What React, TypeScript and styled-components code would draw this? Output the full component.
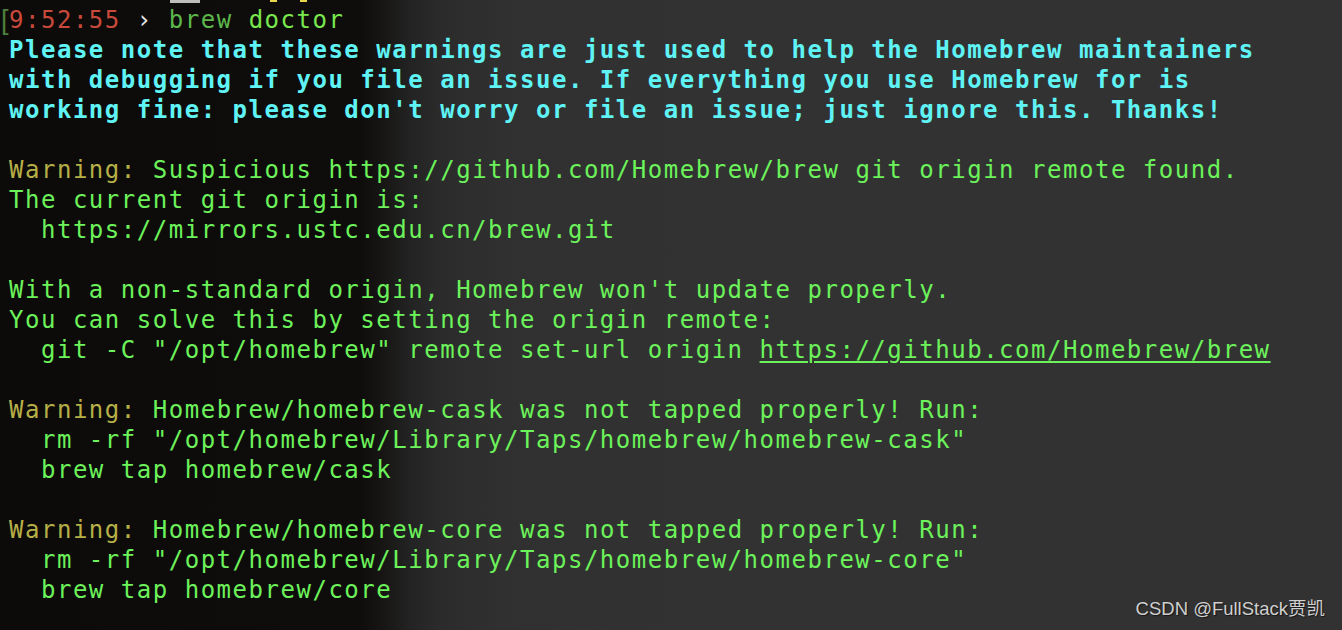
import React from "react";
import styled, { createGlobalStyle } from "styled-components";

const Global = createGlobalStyle`
  html, body { margin: 0; padding: 0; background: #0d0b0a; }
  body { width: 1342px; height: 630px; overflow: hidden; }
`;

const Screen = styled.div`
  position: relative;
  width: 1342px;
  height: 630px;
  box-sizing: border-box;
  padding-left: 9px;
  overflow: hidden;
  background: linear-gradient(
    90deg,
    #0d0b0a 0px,
    #0f0d0c 360px,
    #181716 385px,
    #232323 410px,
    #2b2b2b 440px,
    #303030 500px,
    #323232 700px,
    #323232 100%
  );
`;

const TopStrip = styled.div`
  display: flex;
  height: 3px;
`;

const Scrap = styled.div<{ $x: number; $w: number; $c: string; $h: number }>`
  margin-left: ${(p) => p.$x}px;
  width: ${(p) => p.$w}px;
  height: ${(p) => p.$h}px;
  background: ${(p) => p.$c};
  flex: none;
`;

const Lines = styled.div`
  margin-top: 2px;
  font-family: "DejaVu Sans Mono", "Liberation Mono", monospace;
  font-size: 24px;
  letter-spacing: 1.52px;
  color: #6cf25a;
`;

const Line = styled.div<{ $bold?: boolean; $shift?: number }>`
  height: 30px;
  line-height: 30px;
  white-space: pre;
  font-weight: ${(p) => (p.$bold ? 700 : 400)};
  margin-left: ${(p) => p.$shift ?? 0}px;
`;

const Seg = styled.span<{ $c: string }>`
  color: ${(p) => p.$c};
`;

const Bracket = styled.span`
  display: inline-block;
  width: 9px;
  font-family: "Liberation Sans", sans-serif;
  font-size: 27px;
  line-height: 30px;
  vertical-align: top;
  letter-spacing: 0;
  color: #4f7f3e;
  text-indent: 1px;
`;

const Link = styled.span`
  text-decoration: underline;
  text-decoration-thickness: 2px;
  text-underline-offset: 3px;
`;

const Watermark = styled.div`
  position: absolute;
  right: 17px;
  bottom: 10px;
  font-family: "Liberation Sans", "Noto Sans CJK SC", sans-serif;
  font-size: 18.5px;
  color: #cfcfcf;
  text-shadow: 1px 1px 1px rgba(0, 0, 0, 0.6);
  white-space: nowrap;
`;

const C = {
  cyan: "#5ff3f5",
  warn: "#b6b046",
  time: "#c9493a",
  arrow: "#e6e6e6",
  brew: "#5cb84a",
  doctor: "#79e84c",
};

function Warning({ text }: { text: string }) {
  return (
    <Line>
      <Seg $c={C.warn}>Warning:</Seg> {text}
    </Line>
  );
}

export default function App() {
  return (
    <Screen>
      <Global />
      <TopStrip>
        <Scrap $x={161} $w={30} $h={3} $c="#bdbdbd" />
        <Scrap $x={70} $w={7} $h={2} $c="#e7d64a" />
        <Scrap $x={23} $w={7} $h={2} $c="#e7d64a" />
      </TopStrip>
      <Lines>
        <Line $shift={-9}>
          <Bracket>[</Bracket>
          <Seg $c={C.time}>9:52:55</Seg> <Seg $c={C.arrow}>›</Seg>{" "}
          <Seg $c={C.brew}>brew</Seg> <Seg $c={C.doctor}>doctor</Seg>
        </Line>
        <Line $bold>
          <Seg $c={C.cyan}>Please note that these warnings are just used to help the Homebrew maintainers</Seg>
        </Line>
        <Line $bold>
          <Seg $c={C.cyan}>with debugging if you file an issue. If everything you use Homebrew for is</Seg>
        </Line>
        <Line $bold>
          <Seg $c={C.cyan}>working fine: please don't worry or file an issue; just ignore this. Thanks!</Seg>
        </Line>
        <Line> </Line>
        <Warning text="Suspicious https://github.com/Homebrew/brew git origin remote found." />
        <Line>The current git origin is:</Line>
        <Line>  https://mirrors.ustc.edu.cn/brew.git</Line>
        <Line> </Line>
        <Line>With a non-standard origin, Homebrew won't update properly.</Line>
        <Line>You can solve this by setting the origin remote:</Line>
        <Line>
          {"  git -C \"/opt/homebrew\" remote set-url origin "}
          <Link>https://github.com/Homebrew/brew</Link>
        </Line>
        <Line> </Line>
        <Warning text="Homebrew/homebrew-cask was not tapped properly! Run:" />
        <Line>  rm -rf "/opt/homebrew/Library/Taps/homebrew/homebrew-cask"</Line>
        <Line>  brew tap homebrew/cask</Line>
        <Line> </Line>
        <Warning text="Homebrew/homebrew-core was not tapped properly! Run:" />
        <Line>  rm -rf "/opt/homebrew/Library/Taps/homebrew/homebrew-core"</Line>
        <Line>  brew tap homebrew/core</Line>
      </Lines>
      <Watermark>CSDN @FullStack贾凯</Watermark>
    </Screen>
  );
}
